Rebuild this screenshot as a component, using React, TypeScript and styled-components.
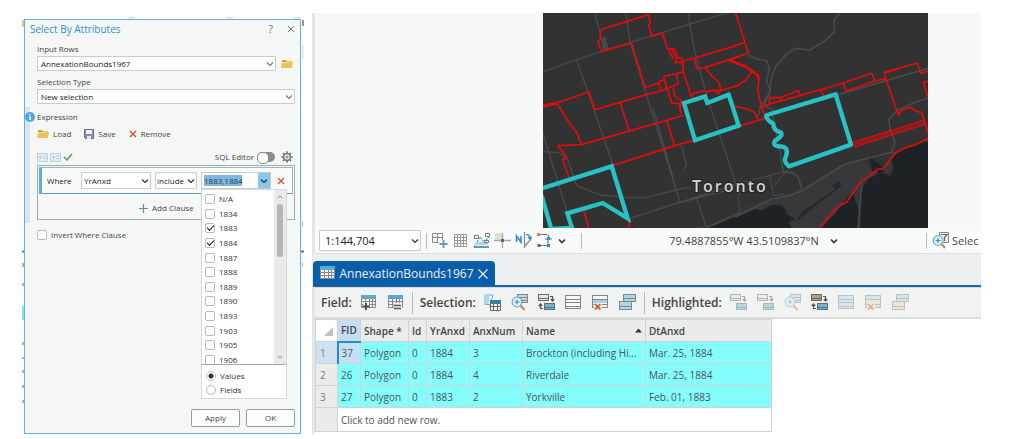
import React from 'react';
import styled, { createGlobalStyle, css } from 'styled-components';

const Global = createGlobalStyle`
  * { box-sizing: border-box; }
  body { margin: 0; background: #fff; color: #444; font: 8px/14px "Open Sans", "Noto Sans", sans-serif; }
  button, select, input { font: inherit; color: inherit; margin: 0; padding: 0; }
  svg { flex: none; }
`;

/* ---------- page ---------- */
const Page = styled.main`
  display: flex;
  gap: 8px;
  padding: 13px 43px 5px 22px;
`;
const Backdrop = styled.div`
  position: relative;
  flex: none;
  width: 282px;
  padding: 6px 3px 0 2px;
`;
const Fragments = styled.svg`
  position: absolute;
  inset: 0;
  width: 100%;
  height: 100%;
`;

/* ---------- dialog ---------- */
const Dialog = styled.section`
  position: relative;
  display: flex;
  flex-direction: column;
  min-height: 415px;
  padding: 0 5px 6px 12px;
  border: 1px solid #66b2dd;
  background: #f5f7f7;
`;
const TitleBar = styled.header`
  display: flex;
  align-items: center;
  height: 18px;
  gap: 14px;
  margin-left: -7px;
`;
const Title = styled.h1`
  flex: 1;
  margin: 0;
  font-size: 10px;
  font-weight: 500;
  color: #2f8fc9;
`;
const IconButton = styled.button`
  display: inline-flex;
  align-items: center;
  justify-content: center;
  gap: 4px;
  border: 0;
  background: none;
  white-space: nowrap;
  svg { display: block; }
`;
const HelpButton = styled(IconButton)`
  font-size: 11px;
  color: #777;
`;
const Label = styled.label`
  display: block;
  height: 12px;
  line-height: 10px;
`;
const Field = styled.div`
  margin-top: 6px;
`;
const Line = styled.div<{ $gap?: number; $end?: number }>`
  display: flex;
  align-items: center;
  gap: ${(p) => p.$gap ?? 5}px;
  padding-right: ${(p) => p.$end ?? 0}px;
`;
const SelectWrap = styled.span<{ $w?: number; $h: number; $pad?: number }>`
  position: relative;
  display: flex;
  ${(p) => (p.$w ? css`flex: none; width: ${p.$w}px;` : css`flex: 1;`)}
  height: ${(p) => p.$h}px;
  select {
    width: 100%;
    padding: 0 12px 0 ${(p) => p.$pad ?? 3}px;
    border: 1px solid #c9cccd;
    border-radius: 1px;
    background: #fff;
    color: #222;
    appearance: none;
    text-overflow: clip;
  }
  svg {
    position: absolute;
    right: 2px;
    top: 50%;
    margin-top: -4px;
    pointer-events: none;
  }
`;
const Expression = styled.div`
  position: relative;
  height: 116px;
  margin: 3px 0 0 -12px;
  padding-left: 7px;
  border-left: 5px solid #d6e6f2;
`;
const InfoBadge = styled.svg`
  position: absolute;
  left: -5px;
  top: 5px;
`;
const Caption = styled.div`
  padding-top: 3px;
`;
const Actions = styled.div`
  display: flex;
  gap: 13px;
  margin-top: 3px;
`;
const Tools = styled.div`
  display: flex;
  align-items: center;
  gap: 2px;
  height: 14px;
  margin-top: 9px;
  padding-right: 2px;
`;
const SwitchLabel = styled.label`
  display: flex;
  align-items: center;
  gap: 3px;
  margin-left: auto;
  margin-right: 4px;
`;
const Switch = styled.input`
  appearance: none;
  width: 18px;
  height: 10px;
  border-radius: 5px;
  background: #8b8b8b;
  &::after {
    content: '';
    display: block;
    width: 10px;
    height: 10px;
    border: 1px solid #8b8b8b;
    border-radius: 5px;
    background: #fff;
  }
`;
const Builder = styled.div`
  height: 55px;
  margin-top: 1px;
  padding: 1px;
  border: 1px solid #a5a9ab;
`;
const Clause = styled.div`
  display: flex;
  align-items: center;
  height: 27px;
  padding-left: 5px;
  border: 1px solid #9fb4c1;
  border-bottom-color: #5a9cc8;
  border-left: 3px solid #5aaddc;
  background: #f9fbfb;
  color: #222;
`;
const Where = styled.span`
  width: 34px;
`;
const Combo = styled.div`
  display: flex;
  width: 70px;
  height: 17px;
  margin: 0 6px 0 4px;
  border: 1px solid #c9cccd;
  background: #fff;
  input {
    flex: 1;
    min-width: 0;
    border: 0;
    padding: 0 2px;
    background: linear-gradient(#7fb8dd, #7fb8dd) 2px 2px / 38px 11px no-repeat;
    color: #1f3b52;
    outline: 0;
  }
`;
const ComboButton = styled(IconButton)`
  width: 12px;
  background: #8cc6e8;
`;
const AddClause = styled(IconButton)`
  margin: 7px 0 0 100px;
`;
const Invert = styled.label`
  display: flex;
  align-items: center;
  gap: 4px;
  margin-top: 5px;
`;
const Tick = styled.input`
  appearance: none;
  flex: none;
  width: 10px;
  height: 10px;
  border: 1px solid #b7babb;
  border-radius: 2px;
  background: #fff;
  &:checked::after {
    content: '';
    display: block;
    width: 6px;
    height: 3px;
    margin: 1px;
    border: solid #222;
    border-width: 0 0 1px 1px;
    transform: rotate(-45deg);
  }
`;
const Popup = styled.div`
  position: absolute;
  z-index: 2;
  top: 169px;
  right: 13px;
  width: 86px;
  border: 1px solid #d5d8da;
  background: #fff;
  color: #333;
`;
const ListArea = styled.div`
  display: flex;
  height: 175px;
  overflow: hidden;
  border-bottom: 1px solid #a8a8a8;
`;
const Options = styled.div`
  flex: 1;
  display: grid;
  grid-auto-rows: 1fr;
  height: 177px;
  padding: 2px 0 0 3px;
`;
const Option = styled.label`
  display: flex;
  align-items: center;
  gap: 4px;
`;
const Scroll = styled.div`
  display: flex;
  flex-direction: column;
  align-items: center;
  width: 12px;
  padding: 3px 0;
  background: #e9ebeb;
`;
const Thumb = styled.div`
  width: 6px;
  height: 53px;
  margin: 3px 0 auto;
  border-radius: 3px;
  background: #b3b5b6;
`;
const RadioGroup = styled.div`
  padding: 4px 0 1px 4px;
`;
const Radio = styled.input`
  appearance: none;
  width: 10px;
  height: 10px;
  border: 1px solid #b7babb;
  border-radius: 5px;
  background: #fff;
  &:checked { background: radial-gradient(#333 0 2px, #fff 3px); }
`;
const Footer = styled.footer`
  display: flex;
  justify-content: flex-end;
  gap: 6px;
  margin-top: auto;
`;
const PushButton = styled.button`
  width: 49px;
  height: 18px;
  border: 1px solid #999;
  border-radius: 2px;
  background: #fcfdfd;
`;

/* ---------- map view ---------- */
const Workspace = styled.section`
  flex: 1;
  min-width: 0;
  border-left: 3px solid #e3e5e7;
`;
const MapPane = styled.div`
  display: flex;
  padding: 0 53px 0 228px;
  background: #f7f8f8;
`;
const MapSvg = styled.svg`
  display: block;
  flex: 1;
  min-width: 0;
  height: auto;
`;
const StatusBar = styled.div`
  display: flex;
  align-items: center;
  height: 26px;
  padding-left: 4px;
  border-bottom: 1px solid #dddfe0;
  background: #f8f9f9;
  font-size: 11px;
  font-weight: 500;
  overflow: hidden;
`;
const Divider = styled.i<{ $h: number }>`
  flex: none;
  width: 1px;
  height: ${(p) => p.$h}px;
  background: #b5b8ba;
`;
const MapTools = styled.div`
  display: flex;
  align-items: center;
  gap: 4px;
  padding: 0 14px 0 5px;
`;
const Coordinates = styled.div`
  display: flex;
  align-items: center;
  gap: 10px;
  margin: 0 auto;
  white-space: nowrap;
`;
const SelectionInfo = styled.div`
  display: flex;
  align-items: center;
  gap: 3px;
  width: 54px;
  padding-left: 5px;
  background: #fff;
  white-space: nowrap;
`;

/* ---------- attribute table ---------- */
const TabStrip = styled.div`
  height: 33px;
  padding-top: 7px;
  margin-left: -2px;
  border-bottom: 2px solid #1b68a9;
  background: #edeff1;
`;
const Tab = styled.div`
  display: flex;
  align-items: center;
  justify-content: space-between;
  width: 182px;
  height: 25px;
  padding: 0 6px;
  border-radius: 4px 4px 0 0;
  background: #0a5ea8;
  color: #e6f0f8;
  font-size: 12px;
`;
const TableTools = styled.div`
  display: flex;
  align-items: center;
  height: 32px;
  padding-left: 6px;
  border-top: 1px solid #d5d7d8;
  border-bottom: 2px solid #d9dbdc;
  background: #f1f2f2;
  font-size: 12px;
`;
const ToolGroup = styled.div`
  display: flex;
  align-items: center;
  gap: 10px;
  padding-right: 8px;
  & + i { margin-right: 7px; }
  b { font-weight: 600; white-space: nowrap; margin-right: -2px; }
`;
const Grid = styled.table`
  width: 456px;
  border-collapse: collapse;
  table-layout: fixed;
  font-size: 10px;
  color: #4a5557;
  th, td {
    height: 22px;
    padding: 0 3px;
    border: 1px solid #cfd3d3;
    text-align: left;
    font-weight: 500;
    white-space: nowrap;
  }
  thead th { background: #eaecec; font-weight: 600; color: #444; }
  thead th:first-child { background: #fff; }
  tbody th { background: #eaecec; color: #777; padding-left: 4px; }
  tbody td { background: #86fdfd; }
  tbody tr:last-child td { height: 24px; }
`;
const SortHead = styled.span`
  display: flex;
  align-items: center;
  justify-content: space-between;
`;
const KeyHead = styled.th`
  && { background: #c5def2; border-bottom: 2px solid #2a8bc8; }
`;
const CurrentRow = styled.th`
  && { background: #cfe0f0; border-right: 2px solid #2a8bc8; }
`;
const CurrentCell = styled.td`
  && { background: #c5e0f2; }
`;
const NewRow = styled.td`
  && { background: #fff; }
`;

/* ---------- icons ---------- */
const Chevron = ({ size = 8, color = '#777', up = false, w = 1.2 }: { size?: number; color?: string; up?: boolean; w?: number }) => (
  <svg width={size} height={8} viewBox="0 0 8 8" fill="none" stroke={color} strokeWidth={w} aria-hidden>
    <path d={up ? 'M1 5.5 4 2.5l3 3' : 'M1 2.5l3 3 3-3'} />
  </svg>
);
const Cross = ({ size = 8, color = '#777', w = 1 }: { size?: number; color?: string; w?: number }) => (
  <svg width={size} height={size} viewBox="0 0 8 8" stroke={color} strokeWidth={w} aria-hidden>
    <path d="M1 1l6 6M7 1L1 7" />
  </svg>
);
const Folder = () => (
  <svg width="12" height="10" viewBox="0 0 12 10" aria-hidden>
    <path d="M1 1h4l1 1h5v2H1z" fill="#c9a43c" />
    <path d="M0 9l1-6h11l-1 6z" fill="#e5c65a" />
    <path d="M1 4l6-1h4" stroke="#f6e6a0" fill="none" />
  </svg>
);
const Disk = () => (
  <svg width="10" height="10" viewBox="0 0 10 10" aria-hidden>
    <path d="M.5.5h9v9h-8l-1-1z" fill="#8391b5" stroke="#5f6d92" />
    <path d="M2 1h6v4H2z" fill="#eef1f6" />
    <path d="M3 7h4v3H3z" fill="#dfe4ee" />
  </svg>
);
const PanelIcon = () => (
  <svg width="11" height="9" viewBox="0 0 11 9" fill="none" stroke="#b9cfde" aria-hidden>
    <path d="M.5.5h10v8H.5z" fill="#e3edf4" />
    <path d="M2 4.500h3M3.500 3v3M6.500 3h3M6.500 5.500h3" />
  </svg>
);
const Check = () => (
  <svg width="10" height="8" viewBox="0 0 10 8" fill="none" stroke="#5f9b63" strokeWidth="1.500" aria-hidden>
    <path d="M1 4l3 3 5-6" />
  </svg>
);
const Gear = () => (
  <svg width="12" height="12" viewBox="0 0 12 12" fill="none" stroke="#6a6a6a" aria-hidden>
    <circle cx="6" cy="6" r="3.300" strokeWidth="1.300" />
    <circle cx="6" cy="6" r="1.200" strokeWidth=".8" />
    <path d="M6 .3v2M6 9.700v2M.3 6h2M9.700 6h2M2 2l1.400 1.400M8.600 8.600L10 10M2 10l1.400-1.400M8.600 3.400L10 2" strokeWidth="1.500" />
  </svg>
);
const Plus = () => (
  <svg width="9" height="9" viewBox="0 0 9 9" stroke="#5f9b63" strokeWidth="1.200" aria-hidden>
    <path d="M4.500 0v9M0 4.500h9" />
  </svg>
);
const Glyph = ({ children, w = 17, faded = false }: { children: React.ReactNode; w?: number; faded?: boolean }) => (
  <svg width={w} height={17} viewBox={`0 0 ${w} 17`} fill="none" opacity={faded ? 0.45 : 1} aria-hidden>
    {children}
  </svg>
);
const Rows = ({ x = 0, y = 0, w = 15, h = 14, n = 3, fill = '#f4f4f4', stroke = '#858585' }) => (
  <g transform={`translate(${x} ${y})`}>
    <rect x=".5" y=".5" width={w - 1} height={h - 1} fill={fill} stroke={stroke} />
    {Array.from({ length: n - 1 }, (_, i) => (
      <path key={i} d={`M1 ${Math.round(((i + 1) * h) / n) + 0.5}h${w - 2}`} stroke={stroke} />
    ))}
  </g>
);
const Sheet = () => (
  <>
    <path d="M1.500 1.500h14v12h-14z" fill="#f4f4f4" stroke="#888" />
    <path d="M1 1h15v4H1z" fill="#5fa9cc" />
    <path d="M1 7.500h15M1 10.500h15M5.500 5v9M9.500 5v9M12.500 5v9" stroke="#888" />
  </>
);
const AddField = () => (
  <Glyph><Sheet /><path d="M3 10h6v4H3z" fill="#f1f2f2" /><path d="M6 9v7M2.500 12.500h7" stroke="#444" strokeWidth="1.800" /></Glyph>
);
const CalcField = () => (
  <Glyph><Sheet /><path d="M7 9h8v7H7z" fill="#f1f2f2" /><path d="M7 11.500h7M7 14.500h7" stroke="#555" strokeWidth="1.400" /></Glyph>
);
const SelectAttr = () => (
  <Glyph>
    <path d="M1 1h8l-1.500 5v4.500H1z" fill="#eef7fb" stroke="#5fb6d8" />
    <path d="M1 1h4.500l-1 9H1z" fill="#a5d8ea" />
    <path d="M6.500 6.500h10v10h-10z" fill="#eee" stroke="#666" />
    <path d="M6 6h11v4H6z" fill="#3d7fa3" />
    <path d="M7 12.500h9M9.500 10v6M13.500 10v6" stroke="#666" />
  </Glyph>
);
const ZoomSel = ({ faded = false }) => (
  <Glyph faded={faded}>
    <Rows x={6} y={0} w={11} h={9} n={3} fill="#cfd3d6" />
    <circle cx="6" cy="8" r="4.800" fill="#e8f5fc" stroke="#62b0dc" strokeWidth="1.300" />
    <path d="M3.500 8h5M6 5.500v5" stroke="#2f8fc9" strokeWidth="1.200" />
    <path d="M9.500 11.500l4 4.500" stroke="#c98a5c" strokeWidth="2.200" />
  </Glyph>
);
const ZoomFilter = () => (
  <Glyph>
    <path d="M7.500.5h9v10h-9z" fill="#eef0f0" stroke="#888" />
    <path d="M9 2.500h6l-2.500 3V9" stroke="#666" strokeWidth="1.200" />
    <circle cx="6" cy="8.500" r="4.800" fill="#e8f5fc" stroke="#62b0dc" strokeWidth="1.300" />
    <path d="M3.500 8.500h5M6 6v5" stroke="#2f8fc9" strokeWidth="1.200" />
    <path d="M9.500 12l3.500 4" stroke="#c98a5c" strokeWidth="2.200" />
  </Glyph>
);
const SwitchSel = ({ top = '#e7e7e7', bottom = '#6db5d3', faded = false, back = true }) => (
  <Glyph faded={faded}>
    <Rows x={0} y={0} w={11} h={7} n={2} fill={top} stroke="#6a6a6a" />
    <Rows x={6} y={9} w={11} h={7} n={2} fill={bottom} stroke="#6a6a6a" />
    <path d="M12 2.500h2.500V7M12.800 5l1.700 2L16.200 5" stroke="#555" strokeWidth="1.200" />
    {back && <path d="M5 14.500H2.500V10M.8 12l1.700-2L4.200 12" stroke="#555" strokeWidth="1.200" />}
  </Glyph>
);
const SelectRows = ({ fill = '#f8f8f8', faded = false }) => (
  <Glyph faded={faded}><Rows x={0} y={1} w={16} h={14} n={4} fill={fill} /></Glyph>
);
const DeleteRows = ({ faded = false, fill = '#f8f8f8' }) => (
  <Glyph faded={faded}>
    <Rows x={0} y={1} w={16} h={13} fill={fill} />
    <path d="M1 6h14v3H1z" fill={faded ? '#f3d9a0' : '#9fd4ee'} />
    <path d="M3 9.500l6 6M9 9.500l-6 6" stroke="#f1f2f2" strokeWidth="4" />
    <path d="M3 10l5.500 5.500M8.500 10L3 15.500" stroke="#d0643c" strokeWidth="1.800" />
  </Glyph>
);
const StackRows = ({ faded = false, fill = '#a9d8ee' }) => (
  <Glyph faded={faded}>
    <Rows x={4} y={0} w={13} h={8} n={2} fill="#a9d8ee" />
    <Rows x={0} y={7} w={13} h={9} n={2} fill={fill} />
  </Glyph>
);

/* ---------- map drawing ---------- */
const TorontoMap = () => (
  <MapSvg viewBox="543 12 385 215" role="img" aria-label="Map of Toronto annexations">
    <rect x="543" y="12" width="386" height="217" fill="#323232" />
    <g transform="translate(735 8) scale(.33333)">
      <path d="M-50 640C0 610 60 580 110 570L200 545 330 465 380 450 440 500 470 430 580 385V665H-170z" fill="#37383a" />
      <path d="M-100 665L60 600 80 605 110 588 140 590 150 600 155 615 180 630 160 640 175 665zM580 400L560 395 520 415 490 430 470 450 475 480 465 500 440 488 400 510 385 530 380 570 375 665 580 665zM405 445l35 25 10 25-40-10z" fill="#1d2226" />
      <path d="M250 665L300 615 340 560 355 555 370 600 365 665z" fill="#1d2226" />
      <path d="M180 640L320 530 310 515 290 530 300 540 200 610z" fill="#26292c" />
    </g>
    <g fill="none" stroke="#484b4c" strokeWidth="4" transform="translate(540 8) scale(.33333)">
      <path d="M9 188L110 152 182 128 450 45 600 0" />
      <path d="M110 152L220 470M258 15L270 100 420 580M165 15L185 90 205 120M9 375L85 620M445 15L460 110 500 260 600 560M340 300L420 580 560 545M270 628L590 525M470 570L500 655" />
      <path d="M9 427L60 432 85 455 110 530 180 558 260 565 320 566 420 540 450 535M425 410L440 470 430 480M500 655L600 610" />
      <path d="M183 90l12-10 12 42-18 4z" fill="#484b4c" stroke="none" />
    </g>
    <g fill="none" stroke="#484b4c" strokeWidth="5" transform="translate(735 8) scale(.33333)">
      <path d="M315 13L298 30 298 70 270 95 225 123 180 118 155 135 120 175 108 210 105 250 75 295 70 320M40 138L65 150 95 155 103 175 95 215 105 245" />
      <path d="M105 250L85 290 110 300 130 400 145 490 170 490 190 505 200 540" />
      <path d="M0 625L40 605 110 570 160 560 200 545 330 465 470 430 480 400 465 360 462 330 485 305 540 280 580 268M300 260L580 178" />
      <path d="M0 527L160 485M105 500L115 560 150 555M110 540L150 490M10 560L15 620M380 500L370 665" strokeWidth="3" />
    </g>
    <g fill="none" stroke="#e30b0e" strokeWidth="5" strokeLinejoin="round" transform="translate(540 8) scale(.33333)">
      <path d="M182 62L325 17 331 40 326 48 335 82 367 72 382 118 395 120 410 150 405 160 428 160 440 152 462 148 600 106" />
      <path d="M182 62L180 92 174 98 184 128 274 102 316 236 355 222 360 216 374 212 372 202 405 195 430 188M355 222L364 246 318 257M374 212L380 240M410 197L414 225 382 238 364 246M382 238L395 282 418 284 424 315M400 236L404 262 424 275 420 310" />
      <path d="M395 120L402 118 415 146 427 150 428 160 430 188 454 265M385 122L400 150M462 148L472 180 495 175 600 142M495 175L515 200 538 222 542 245 505 245 495 250M542 245L600 228M454 265L460 253 496 245M500 250L520 243 540 255M565 152L600 165" />
      <path d="M9 293L50 282 147 248 165 302 240 280 318 257M50 282L90 345 110 370 124 407 54 410 80 445 68 452 88 508M240 280L268 366M124 407L380 334 432 318M380 334L404 410 462 394M218 470L404 410M132 607L147 660M265 632L270 660M100 660L125 660" />
      <path d="M9 291L50 282" strokeWidth="9" />
    </g>
    <g fill="none" stroke="#e30b0e" strokeWidth="5" strokeLinejoin="round" transform="translate(735 8) scale(.33333)">
      <path d="M2 13L40 132 0 145M0 110L30 100M75 296L105 285 102 265 136 266 140 274 105 285M133 266L190 245 196 258M105 285L258 242 325 222 410 193 420 216 333 246M258 242L268 267M325 222L333 246M420 216L452 208 448 190 546 162 558 193 580 187M452 208L490 318 500 303 525 295 545 307 560 310 580 375M580 217L565 220 580 268" />
      <path d="M305 262L352 408M356 414L570 346M350 402L566 334" strokeWidth="4" />
      <path d="M353 408L568 340" strokeWidth="3" />
      <path d="M0 160L30 172 68 198 72 215 68 240 72 265 90 325M50 190L30 215 0 233M0 292L30 298 58 310 70 332M10 352L90 328" />
      <path d="M250 665L275 630 310 592 335 580 375 520 430 480 445 480 480 432 515 415 540 408 580 388M448 192L490 180" />
      <path d="M-20 152L30 172 68 198 72 215" strokeWidth="8" />
    </g>
    <g fill="none" stroke="#26c2c4" strokeWidth="13" transform="translate(540 8) scale(.33333)">
      <path d="M0 540L215 472 263 628 188 582 82 613 96 657 34 660 5 560M432 282L495 262 502 282 566 257 596 350 465 394z" />
      <path d="M681 318L887 256 933 407 747 472Q728 455 738 442Q748 415 722 412Q696 412 705 395Q732 380 722 370Q700 365 700 345Q672 325 681 318z" strokeLinejoin="round" />
    </g>
    <text x="692" y="191" fontFamily="Open Sans, Noto Sans, sans-serif" fontSize="16" fontWeight="600" letterSpacing="2" fill="#d3d3d3" stroke="#222" strokeWidth="2" paintOrder="stroke">Toronto</text>
  </MapSvg>
);

/* ---------- data ---------- */
const years = ['N/A', '1834', '1883', '1884', '1887', '1888', '1889', '1890', '1893', '1903', '1905', '1906'];
const records = [
  ['37', 'Polygon', '0', '1884', '3', 'Brockton (including Hi...', 'Mar. 25, 1884'],
  ['26', 'Polygon', '0', '1884', '4', 'Riverdale', 'Mar. 25, 1884'],
  ['27', 'Polygon', '0', '1883', '2', 'Yorkville', 'Feb. 01, 1883'],
];
const columnWidths = [22, 23, 48, 18, 43, 53, 123, 126];

const Picker = ({ id, value, w, h, label, pad, color }: { id?: string; value: string; w?: number; h: number; label?: string; pad?: number; color?: string }) => (
  <SelectWrap $w={w} $h={h} $pad={pad}>
    <select id={id} aria-label={label}><option>{value}</option></select>
    <Chevron color={color} />
  </SelectWrap>
);

const SelectDialog = () => (
  <Dialog aria-label="Select By Attributes">
    <TitleBar>
      <Title>Select By Attributes</Title>
      <HelpButton aria-label="Help">?</HelpButton>
      <IconButton aria-label="Close"><Cross /></IconButton>
    </TitleBar>
    <Field>
      <Label htmlFor="rows">Input Rows</Label>
      <Line $end={2}>
        <Picker id="rows" value="AnnexationBounds1967" h={15} />
        <IconButton aria-label="Browse"><Folder /></IconButton>
      </Line>
    </Field>
    <Field>
      <Label htmlFor="type">Selection Type</Label>
      <Line><Picker id="type" value="New selection" h={15} /></Line>
    </Field>
    <Expression>
      <InfoBadge width="10" height="10" viewBox="0 0 10 10" aria-hidden>
        <circle cx="5" cy="5" r="5" fill="#4aa8dc" />
        <path d="M5 2v1M5 4v4" stroke="#fff" strokeWidth="1.500" />
      </InfoBadge>
      <Caption>Expression</Caption>
      <Actions>
        <IconButton><Folder />Load</IconButton>
        <IconButton><Disk />Save</IconButton>
        <IconButton><Cross color="#c8532c" w={1.4} />Remove</IconButton>
      </Actions>
      <Tools>
        <PanelIcon /><PanelIcon />
        <IconButton aria-label="Verify"><Check /></IconButton>
        <SwitchLabel>SQL Editor<Switch type="checkbox" role="switch" /></SwitchLabel>
        <IconButton aria-label="Options"><Gear /></IconButton>
      </Tools>
      <Builder>
        <Clause>
          <Where>Where</Where>
          <Line $gap={4}>
            <Picker value="YrAnxd" w={70} h={17} label="Field" pad={2} color="#333" />
            <Picker value="include:" w={42} h={17} label="Operator" pad={1} color="#333" />
          </Line>
          <Combo>
            <input aria-label="Values" defaultValue="1883,1884" />
            <ComboButton aria-label="Show values"><Chevron color="#1f3b52" /></ComboButton>
          </Combo>
          <IconButton aria-label="Remove clause"><Cross color="#d0552c" w={1.4} /></IconButton>
        </Clause>
        <AddClause><Plus />Add Clause</AddClause>
      </Builder>
    </Expression>
    <Invert><Tick type="checkbox" />Invert Where Clause</Invert>
    <Popup>
      <ListArea>
        <Options>
          {years.map((y) => (
            <Option key={y}><Tick type="checkbox" defaultChecked={y === '1883' || y === '1884'} />{y}</Option>
          ))}
        </Options>
        <Scroll><Chevron up size={6} /><Thumb /><Chevron size={6} /></Scroll>
      </ListArea>
      <RadioGroup>
        <Option><Radio type="radio" name="source" defaultChecked />Values</Option>
        <Option><Radio type="radio" name="source" />Fields</Option>
      </RadioGroup>
    </Popup>
    <Footer><PushButton>Apply</PushButton><PushButton>OK</PushButton></Footer>
  </Dialog>
);

const MapStatus = () => (
  <StatusBar>
    <Picker value="1:144,704" w={102} h={21} label="Map scale" pad={5} color="#333" />
    <MapTools>
      <Divider $h={16} />
      <Glyph><path d="M1.500 1.500h10v9h-10zM6.500 1v9M1 5.500h11" stroke="#888" /><path d="M8 8h9v8H8z" fill="#f8f9f9" /><path d="M12.500 8v8M8.500 12h8" stroke="#5a9fc4" strokeWidth="1.800" /></Glyph>
      <Glyph><path d="M2.500 2.500h12v12h-12zM5.500 2v13M8.500 2v13M11.500 2v13M2 5.500h13M2 8.500h13M2 11.500h13" stroke="#999" /></Glyph>
      <Glyph><path d="M1 15L7 5l4 5 5-5" stroke="#4aa8dc" strokeDasharray="2 1" strokeWidth="1.300" /><path d="M3 10h12v3H3z" fill="#a9d8ee" /><path d="M1.500 3.500h4v3h-4zM12.500 1.500h4v3h-4zM11.500 8.500h4v2h-4z" stroke="#777" /><path d="M1 15h15" stroke="#3b8f6a" strokeWidth="1.600" /></Glyph>
      <Glyph><path d="M1 1h7v7H1z" fill="#d5e6d3" /><path d="M8.500 1v15M0 8.500h17" stroke="#aaa" strokeWidth="1.300" /><path d="M7 7h3v3H7z" fill="#666" /></Glyph>
      <Glyph><path d="M1.500 10V4l4.500 6V4" stroke="#2f8fc9" strokeWidth="1.600" /><path d="M9.500 0v16M10 14l6-7" stroke="#888" strokeWidth="1.200" /><path d="M11 3c3-1 4 1 4 3M13 5l2 2 2-2" stroke="#2f8fc9" strokeWidth="1.300" /></Glyph>
      <Glyph><path d="M2 2.500h8c3 0 4 3 2 6v5H3M9 7h7" stroke="#777" strokeWidth="1.200" /><path d="M1 1h3v3H1z" fill="#c98a5c" /><path d="M11 12h3v3h-3zM11 5h3v3h-3z" fill="#2f8fc9" /><path d="M1.500 12h3v3h-3z" fill="#666" /></Glyph>
      <Chevron size={10} color="#333" w={1.6} />
    </MapTools>
    <Divider $h={16} />
    <Coordinates>79.4887855°W 43.5109837°N<Chevron size={10} color="#333" w={1.6} /></Coordinates>
    <Divider $h={16} />
    <SelectionInfo><ZoomFilter />Selec</SelectionInfo>
  </StatusBar>
);

const AttributeTable = () => (
  <>
    <TabStrip>
      <Tab>
        <Glyph><Sheet /></Glyph>
        AnnexationBounds1967
        <IconButton aria-label="Close table"><Cross size={12} color="#e6f0f8" w={0.8} /></IconButton>
      </Tab>
    </TabStrip>
    <TableTools>
      <ToolGroup>
        <b>Field:</b>
        <IconButton aria-label="Add field"><AddField /></IconButton>
        <IconButton aria-label="Calculate field"><CalcField /></IconButton>
      </ToolGroup>
      <Divider $h={22} />
      <ToolGroup>
        <b>Selection:</b>
        <IconButton aria-label="Select by attributes"><SelectAttr /></IconButton>
        <IconButton aria-label="Zoom to selection"><ZoomSel /></IconButton>
        <IconButton aria-label="Switch selection"><SwitchSel /></IconButton>
        <IconButton aria-label="Clear selection"><SelectRows /></IconButton>
        <IconButton aria-label="Delete selection"><DeleteRows /></IconButton>
        <IconButton aria-label="Copy rows"><StackRows /></IconButton>
      </ToolGroup>
      <Divider $h={22} />
      <ToolGroup>
        <b>Highlighted:</b>
        <IconButton aria-label="Reselect highlighted"><SwitchSel faded back={false} /></IconButton>
        <IconButton aria-label="Unselect highlighted"><SwitchSel faded back={false} /></IconButton>
        <IconButton aria-label="Zoom to highlighted"><ZoomSel faded /></IconButton>
        <IconButton aria-label="Switch highlighted"><SwitchSel top="#b89a86" /></IconButton>
        <IconButton aria-label="Clear highlighted"><SelectRows faded fill="#b5dcf2" /></IconButton>
        <IconButton aria-label="Delete highlighted"><DeleteRows faded fill="#b5dcf2" /></IconButton>
        <IconButton aria-label="Copy highlighted"><StackRows faded fill="#f3d9a0" /></IconButton>
      </ToolGroup>
    </TableTools>
    <Grid>
      <colgroup>{columnWidths.map((w, i) => <col key={i} width={w} />)}</colgroup>
      <thead>
        <tr>
          <th><svg width="14" height="14" viewBox="0 0 14 14" aria-label="Select all"><path d="M14 5v9H5z" fill="#bfc2c3" /></svg></th>
          <KeyHead>FID</KeyHead>
          <th>Shape *</th>
          <th>Id</th>
          <th>YrAnxd</th>
          <th>AnxNum</th>
          <th><SortHead>Name<svg width="7" height="5" viewBox="0 0 7 5" aria-hidden><path d="M0 4.500L3.500.5 7 4.500z" fill="#333" /></svg></SortHead></th>
          <th>DtAnxd</th>
        </tr>
      </thead>
      <tbody>
        {records.map((r, i) => (
          <tr key={r[0]}>
            {i === 0 ? <CurrentRow>{i + 1}</CurrentRow> : <th>{i + 1}</th>}
            {r.map((c, j) => (i === 0 && j === 0 ? <CurrentCell key={j}>{c}</CurrentCell> : <td key={j}>{c}</td>))}
          </tr>
        ))}
        <tr><th /><NewRow colSpan={7}>Click to add new row.</NewRow></tr>
      </tbody>
    </Grid>
  </>
);

export default function App() {
  return (
    <>
      <Global />
      <Page>
        <Backdrop>
          <Fragments aria-hidden>
            <path d="M1 7v7" stroke="#dcc68c" strokeWidth="2" />
            <path d="M106 5h7M204 5h7" stroke="#c8c8c8" />
            <path d="M272 5h6" stroke="#a9cfe6" />
            <path d="M281 7v6" stroke="#a58aa8" strokeWidth="2" />
            <path d="M280.500 32v14" stroke="#e4e4e4" strokeWidth="2" />
            <path d="M0 238.500h2M279 238.500h3" stroke="#3f7cb8" strokeWidth="2" />
            <path d="M1 250v4M1 270v3M1 329v3M1 344v2M1 357v3M1 372v3M1 387v3" stroke="#b3aca8" strokeWidth="2" />
            <path d="M1 293v14" stroke="#7be6ec" strokeWidth="2" />
            <path d="M280.500 208v6M280.500 250v4" stroke="#c2b8b4" />
          </Fragments>
          <SelectDialog />
        </Backdrop>
        <Workspace>
          <MapPane><TorontoMap /></MapPane>
          <MapStatus />
          <AttributeTable />
        </Workspace>
      </Page>
    </>
  );
}
